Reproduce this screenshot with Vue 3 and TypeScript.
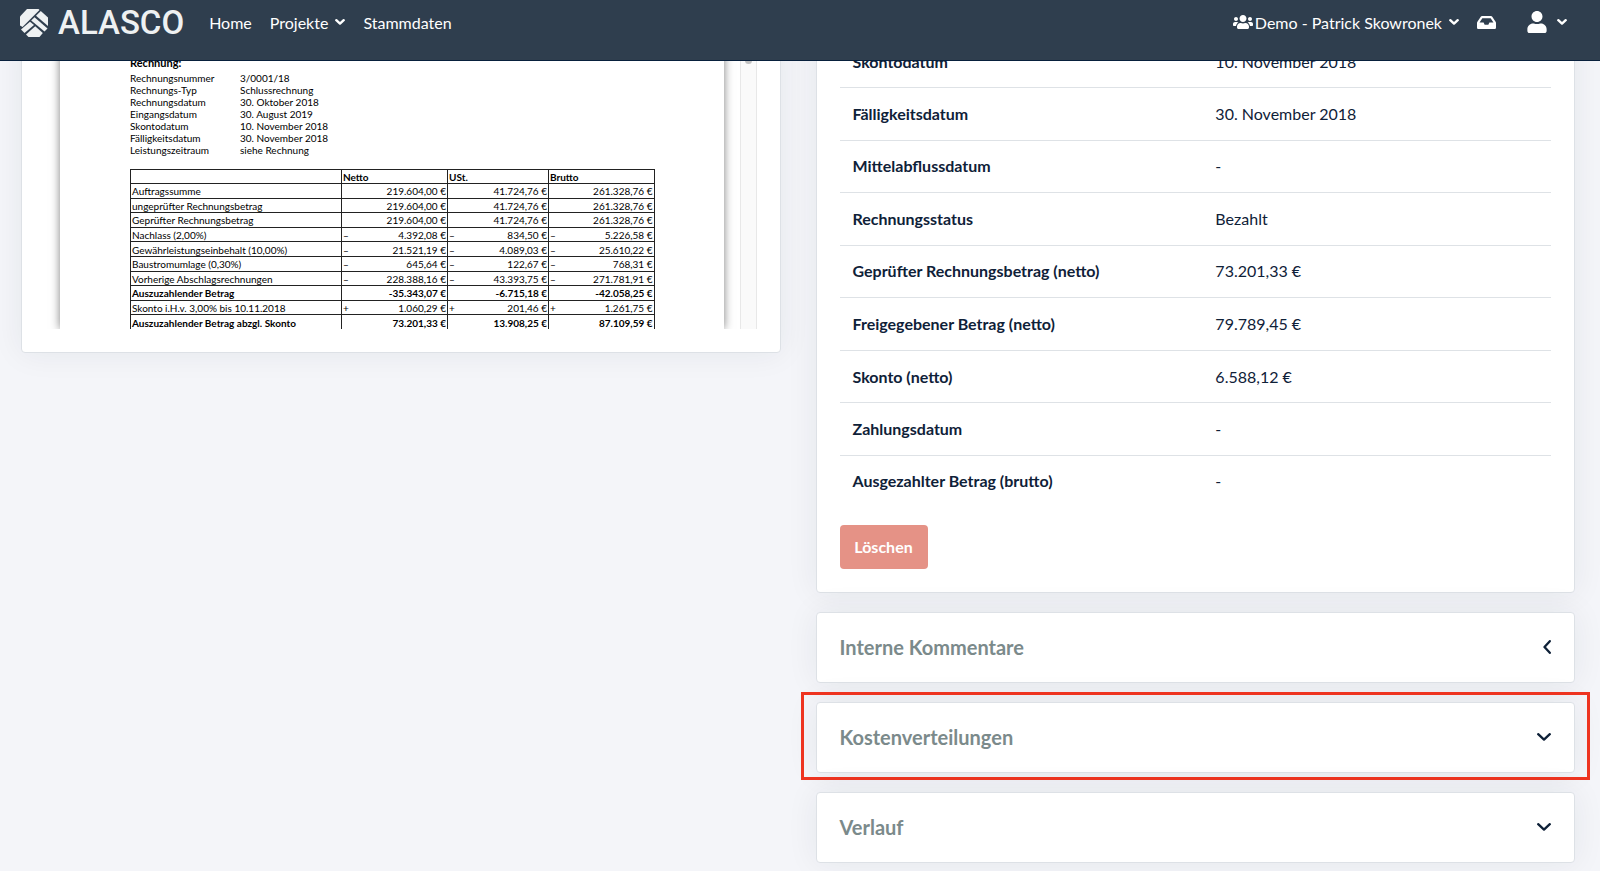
<script setup lang="ts">
interface Detail {
  label: string
  value: string
}

interface InvoiceLine {
  label: string
  sign?: string
  amounts: string[]
  bold?: boolean
}

interface Panel {
  title: string
  icon: 'left' | 'down'
  highlighted?: boolean
}

const invoiceMeta: Detail[] = [
  { label: 'Rechnungsnummer', value: '3/0001/18' },
  { label: 'Rechnungs-Typ', value: 'Schlussrechnung' },
  { label: 'Rechnungsdatum', value: '30. Oktober 2018' },
  { label: 'Eingangsdatum', value: '30. August 2019' },
  { label: 'Skontodatum', value: '10. November 2018' },
  { label: 'Fälligkeitsdatum', value: '30. November 2018' },
  { label: 'Leistungszeitraum', value: 'siehe Rechnung' },
]

const invoiceLines: InvoiceLine[] = [
  { label: 'Auftragssumme', amounts: ['219.604,00 €', '41.724,76 €', '261.328,76 €'] },
  { label: 'ungeprüfter Rechnungsbetrag', amounts: ['219.604,00 €', '41.724,76 €', '261.328,76 €'] },
  { label: 'Geprüfter Rechnungsbetrag', amounts: ['219.604,00 €', '41.724,76 €', '261.328,76 €'] },
  { label: 'Nachlass (2,00%)', sign: '–', amounts: ['4.392,08 €', '834,50 €', '5.226,58 €'] },
  { label: 'Gewährleistungseinbehalt (10,00%)', sign: '–', amounts: ['21.521,19 €', '4.089,03 €', '25.610,22 €'] },
  { label: 'Baustromumlage (0,30%)', sign: '–', amounts: ['645,64 €', '122,67 €', '768,31 €'] },
  { label: 'Vorherige Abschlagsrechnungen', sign: '–', amounts: ['228.388,16 €', '43.393,75 €', '271.781,91 €'] },
  { label: 'Auszuzahlender Betrag', amounts: ['-35.343,07 €', '-6.715,18 €', '-42.058,25 €'], bold: true },
  { label: 'Skonto i.H.v. 3,00% bis 10.11.2018', sign: '+', amounts: ['1.060,29 €', '201,46 €', '1.261,75 €'] },
  { label: 'Auszuzahlender Betrag abzgl. Skonto', amounts: ['73.201,33 €', '13.908,25 €', '87.109,59 €'], bold: true },
]

const details: Detail[] = [
  { label: 'Skontodatum', value: '10. November 2018' },
  { label: 'Fälligkeitsdatum', value: '30. November 2018' },
  { label: 'Mittelabflussdatum', value: '-' },
  { label: 'Rechnungsstatus', value: 'Bezahlt' },
  { label: 'Geprüfter Rechnungsbetrag (netto)', value: '73.201,33 €' },
  { label: 'Freigegebener Betrag (netto)', value: '79.789,45 €' },
  { label: 'Skonto (netto)', value: '6.588,12 €' },
  { label: 'Zahlungsdatum', value: '-' },
  { label: 'Ausgezahlter Betrag (brutto)', value: '-' },
]

const panels: Panel[] = [
  { title: 'Interne Kommentare', icon: 'left' },
  { title: 'Kostenverteilungen', icon: 'down', highlighted: true },
  { title: 'Verlauf', icon: 'down' },
]
</script>

<template>
  <div class="app">
    <header class="navbar">
      <a class="brand" href="#">
        <svg class="brand-mark" viewBox="0 0 28 28" aria-hidden="true">
          <path d="M0 7.500 7 0h11.500L19.500 1 2.500 18 0 16.500z" />
          <path d="M20.800 2 28 8.500v8.500L16 6.800z" />
          <path d="M14.500 8.300 27.500 19.500 24.500 22.500 11.200 11.500z" />
          <path d="M10 12.800 14 16 4.500 24 1 20.500z" />
          <path d="M15.200 17.300 22.800 24 19.500 28H8.500L6 25.500z" />
        </svg>
        <span class="brand-name">ALASCO</span>
      </a>
      <nav class="nav-main" aria-label="Hauptnavigation">
        <a href="#">Home</a>
        <button type="button">
          Projekte
          <svg class="caret" viewBox="0 0 10 6" aria-hidden="true"><path d="M1.300 1.200 5 4.600 8.700 1.200" /></svg>
        </button>
        <a href="#">Stammdaten</a>
      </nav>
      <div class="nav-side">
        <button type="button" class="account">
          <svg class="icon-users" viewBox="0 32 640 448" aria-hidden="true">
            <path d="M96 224c35.3 0 64-28.7 64-64s-28.7-64-64-64-64 28.7-64 64 28.7 64 64 64zm448 0c35.3 0 64-28.7 64-64s-28.7-64-64-64-64 28.7-64 64 28.7 64 64 64zm32 32h-64c-17.6 0-33.5 7.1-45.1 18.6 40.3 22.1 68.9 62 75.1 109.4h66c17.7 0 32-14.3 32-32v-32c0-35.3-28.7-64-64-64zm-256 0c61.900 0 112-50.1 112-112S381.900 32 320 32 208 82.1 208 144s50.1 112 112 112zm76.800 32h-8.300c-20.800 10-43.900 16-68.500 16s-47.600-6-68.500-16h-8.300C179.600 288 128 339.600 128 403.200V432c0 26.500 21.500 48 48 48h288c26.500 0 48-21.500 48-48v-28.800c0-63.600-51.600-115.200-115.200-115.200zm-223.700-13.400C161.500 263.100 145.600 256 128 256H64c-35.300 0-64 28.700-64 64v32c0 17.700 14.300 32 32 32h65.900c6.300-47.400 34.900-87.300 75.200-109.400z" />
          </svg>
          <span class="account-name">Demo - Patrick Skowronek</span>
          <svg class="caret" viewBox="0 0 10 6" aria-hidden="true"><path d="M1.300 1.200 5 4.600 8.700 1.200" /></svg>
        </button>
        <button type="button" class="inbox" aria-label="Posteingang">
          <svg class="icon-inbox" viewBox="0 64 576 384" preserveAspectRatio="none" aria-hidden="true">
            <path d="M567.938 243.908L462.250 85.374A48.003 48.003 0 0 0 422.311 64H153.689a48 48 0 0 0-39.938 21.374L8.062 243.908A47.994 47.994 0 0 0 0 270.533V400c0 26.510 21.490 48 48 48h480c26.510 0 48-21.490 48-48V270.533a47.994 47.994 0 0 0-8.062-26.625zM162.252 128h251.497l85.333 128H376l-32 64H232l-32-64H76.918l85.334-128z" />
          </svg>
        </button>
        <button type="button" class="profile" aria-label="Benutzerkonto">
          <svg class="icon-user" viewBox="0 0 448 512" aria-hidden="true">
            <path d="M224 256c70.700 0 128-57.300 128-128S294.700 0 224 0 96 57.300 96 128s57.300 128 128 128zm89.600 32h-16.700c-22.200 10.200-46.900 16-72.900 16s-50.600-5.800-72.900-16h-16.700C60.200 288 0 348.200 0 422.400V464c0 26.500 21.500 48 48 48h352c26.500 0 48-21.500 48-48v-41.600c0-74.200-60.200-134.400-134.400-134.400z" />
          </svg>
          <svg class="caret" viewBox="0 0 10 6" aria-hidden="true"><path d="M1.300 1.200 5 4.600 8.700 1.200" /></svg>
        </button>
      </div>
    </header>

    <main class="columns">
      <section class="card viewer-card" aria-label="Rechnungsvorschau">
        <div class="viewer">
          <div class="sheet">
            <h2 class="sheet-title">Rechnung:</h2>
            <dl class="meta">
              <template v-for="item in invoiceMeta" :key="item.label">
                <dt>{{ item.label }}</dt>
                <dd>{{ item.value }}</dd>
              </template>
            </dl>
            <table class="invoice">
              <colgroup>
                <col class="col-label" />
                <col class="col-net" />
                <col class="col-tax" />
                <col />
              </colgroup>
              <thead>
                <tr>
                  <td></td>
                  <th scope="col">Netto</th>
                  <th scope="col">USt.</th>
                  <th scope="col">Brutto</th>
                </tr>
              </thead>
              <tbody>
                <tr v-for="line in invoiceLines" :key="line.label" :class="{ bold: line.bold }">
                  <th scope="row">{{ line.label }}</th>
                  <td v-for="(amount, i) in line.amounts" :key="i">
                    <div class="amount">
                      <span>{{ line.sign }}</span>
                      <span>{{ amount }}</span>
                    </div>
                  </td>
                </tr>
              </tbody>
            </table>
          </div>
          <div class="track"><div class="thumb"></div></div>
        </div>
      </section>

      <div class="side">
        <section class="card detail-card" aria-label="Rechnungsdetails">
          <table class="details">
            <tbody>
              <tr v-for="row in details" :key="row.label">
                <th scope="row">{{ row.label }}</th>
                <td>{{ row.value }}</td>
              </tr>
            </tbody>
          </table>
          <button type="button" class="delete">Löschen</button>
        </section>

        <section v-for="panel in panels" :key="panel.title" class="card panel">
          <h2 class="panel-heading">
            <button type="button" class="panel-toggle">
              <span>{{ panel.title }}</span>
              <svg v-if="panel.icon === 'left'" class="chevron-left" viewBox="0 0 8 14" aria-hidden="true">
                <path d="M6.800 1.200 1.500 7 6.800 12.800" />
              </svg>
              <svg v-else class="chevron-down" viewBox="0 0 14 8" aria-hidden="true">
                <path d="M1.200 1.200 7 6.600 12.800 1.200" />
              </svg>
            </button>
          </h2>
          <div v-if="panel.highlighted" class="highlight"></div>
        </section>
      </div>
    </main>
  </div>
</template>

<style>
body {
  margin: 0;
  background: #f4f5f9;
}
</style>

<style scoped>
.app {
  min-height: 100vh;
  overflow: hidden;
  font-family: Lato, "Liberation Sans", sans-serif;
  font-size: 16px;
  color: #0f2138;
}

button {
  font: inherit;
  color: inherit;
  background: none;
  border: 0;
  padding: 0;
  cursor: pointer;
}

/* Navigation bar */
.navbar {
  position: sticky;
  top: 0;
  z-index: 2;
  box-sizing: border-box;
  height: 61px;
  padding: 0 33px 14px 20px;
  display: flex;
  align-items: center;
  background: #2f3e4e;
  border-bottom: 1px solid #08203c;
  color: #fff;
}

.navbar a {
  color: inherit;
  text-decoration: none;
}

.brand {
  display: flex;
  align-items: center;
  gap: 10px;
  margin-right: 25px;
}

.brand-mark {
  width: 28px;
  height: 28px;
  fill: #eef1f2;
}

.brand-name {
  font: 500 33px/36px Roboto, sans-serif;
  color: #eef1f2;
}

.nav-main,
.nav-side {
  display: flex;
  align-items: center;
  padding-bottom: 2px;
}

.nav-main {
  gap: 18px;
}

.nav-main button,
.nav-side button {
  display: flex;
  align-items: center;
  white-space: nowrap;
}

.nav-side {
  margin-left: auto;
}

.caret {
  width: 10px;
  height: 6px;
  margin-left: 7px;
  fill: none;
  stroke: #fff;
  stroke-width: 2.400;
  stroke-linecap: round;
  stroke-linejoin: round;
}

.nav-side svg:not(.caret) {
  fill: #fff;
}

.icon-users {
  width: 20px;
  height: 14px;
}

.account-name {
  margin-left: 2px;
}

.inbox {
  margin-left: 18px;
}

.icon-inbox {
  width: 19px;
  height: 13px;
}

.profile {
  margin-left: 31px;
}

.profile .caret {
  margin-left: 10px;
}

.icon-user {
  width: 20px;
  height: 22px;
}

/* Page body, scrolled partly beneath the bar */
.columns {
  display: grid;
  grid-template-columns: minmax(0, 1fr) minmax(0, 1fr);
  align-items: start;
  gap: 35px;
  margin-top: -26px;
  padding: 0 25px 8px 21px;
}

.card {
  position: relative;
  box-sizing: border-box;
  background: #fff;
  border: 1px solid #dde1e6;
  border-radius: 4px;
  box-shadow: 0 0 32px rgba(30, 45, 60, 0.07);
}

.viewer-card {
  padding: 0 23px 23px 24px;
}

.viewer {
  display: flex;
  height: 293px;
  overflow: hidden;
}

.sheet {
  flex: 1;
  margin: 0 16px 0 14px;
  padding: 20px 69px 0 70px;
  box-shadow: 0 0 9px rgba(0, 0, 0, 0.5);
  color: #000;
  font-size: 10px;
  line-height: 12px;
}

.sheet-title {
  margin: 0 0 2px;
  font-size: 11px;
  line-height: 14px;
}

.meta {
  display: grid;
  grid-template-columns: 110px 1fr;
  margin: 0 0 13px;
}

.meta dd {
  margin: 0;
}

.invoice {
  width: 100%;
  height: 161px;
  table-layout: fixed;
  border-collapse: collapse;
}

.invoice th,
.invoice td {
  padding: 1px 1px 0;
  border: 1px solid #222;
  text-align: left;
  font-weight: 400;
  white-space: nowrap;
}

.invoice thead th,
.invoice .bold th,
.invoice .bold td {
  font-weight: 700;
}

.col-label {
  width: 211px;
}

.col-net {
  width: 106px;
}

.col-tax {
  width: 101px;
}

.amount {
  display: flex;
  justify-content: space-between;
}

.track {
  box-sizing: border-box;
  width: 17px;
  background: #fafafa;
  border: solid #e8e8e8;
  border-width: 0 1px;
}

.thumb {
  width: 7px;
  height: 28px;
  margin: 0 auto;
  border-radius: 4px;
  background: #c1c1c1;
}

/* Right column */
.side {
  display: grid;
  gap: 19px;
}

.detail-card {
  padding: 0 23px 23px;
}

.details {
  width: 100%;
  height: 471px;
  table-layout: fixed;
  border-collapse: collapse;
  line-height: 24px;
}

.details th,
.details td {
  padding: 0 13px;
  text-align: left;
  font-weight: 400;
}

.details th {
  width: 51%;
  box-sizing: border-box;
  font-weight: 700;
}

.details tr + tr {
  border-top: 1px solid #dee2e6;
}

.delete {
  display: block;
  margin-top: 18px;
  width: 88px;
  height: 44px;
  padding-bottom: 2px;
  border-radius: 4px;
  background: #e59286;
  color: #fff;
  font-weight: 700;
}

.panel-heading {
  margin: 0;
  font-size: 20px;
  line-height: 24px;
}

.panel-toggle {
  box-sizing: border-box;
  width: 100%;
  height: 69px;
  padding: 0 23px 2px;
  display: flex;
  align-items: center;
  justify-content: space-between;
  color: #7b8a8b;
}

.chevron-left,
.chevron-down {
  fill: none;
  stroke: #0f2138;
  stroke-width: 2.300;
  stroke-linecap: round;
  stroke-linejoin: round;
}

.chevron-left {
  width: 8px;
  height: 14px;
}

.chevron-down {
  width: 14px;
  height: 8px;
}

/* Marker frame that lies over the panel and its surroundings */
.highlight {
  position: absolute;
  inset: -11px -16px -8px;
  border: 3px solid #ee3420;
  pointer-events: none;
}
</style>
